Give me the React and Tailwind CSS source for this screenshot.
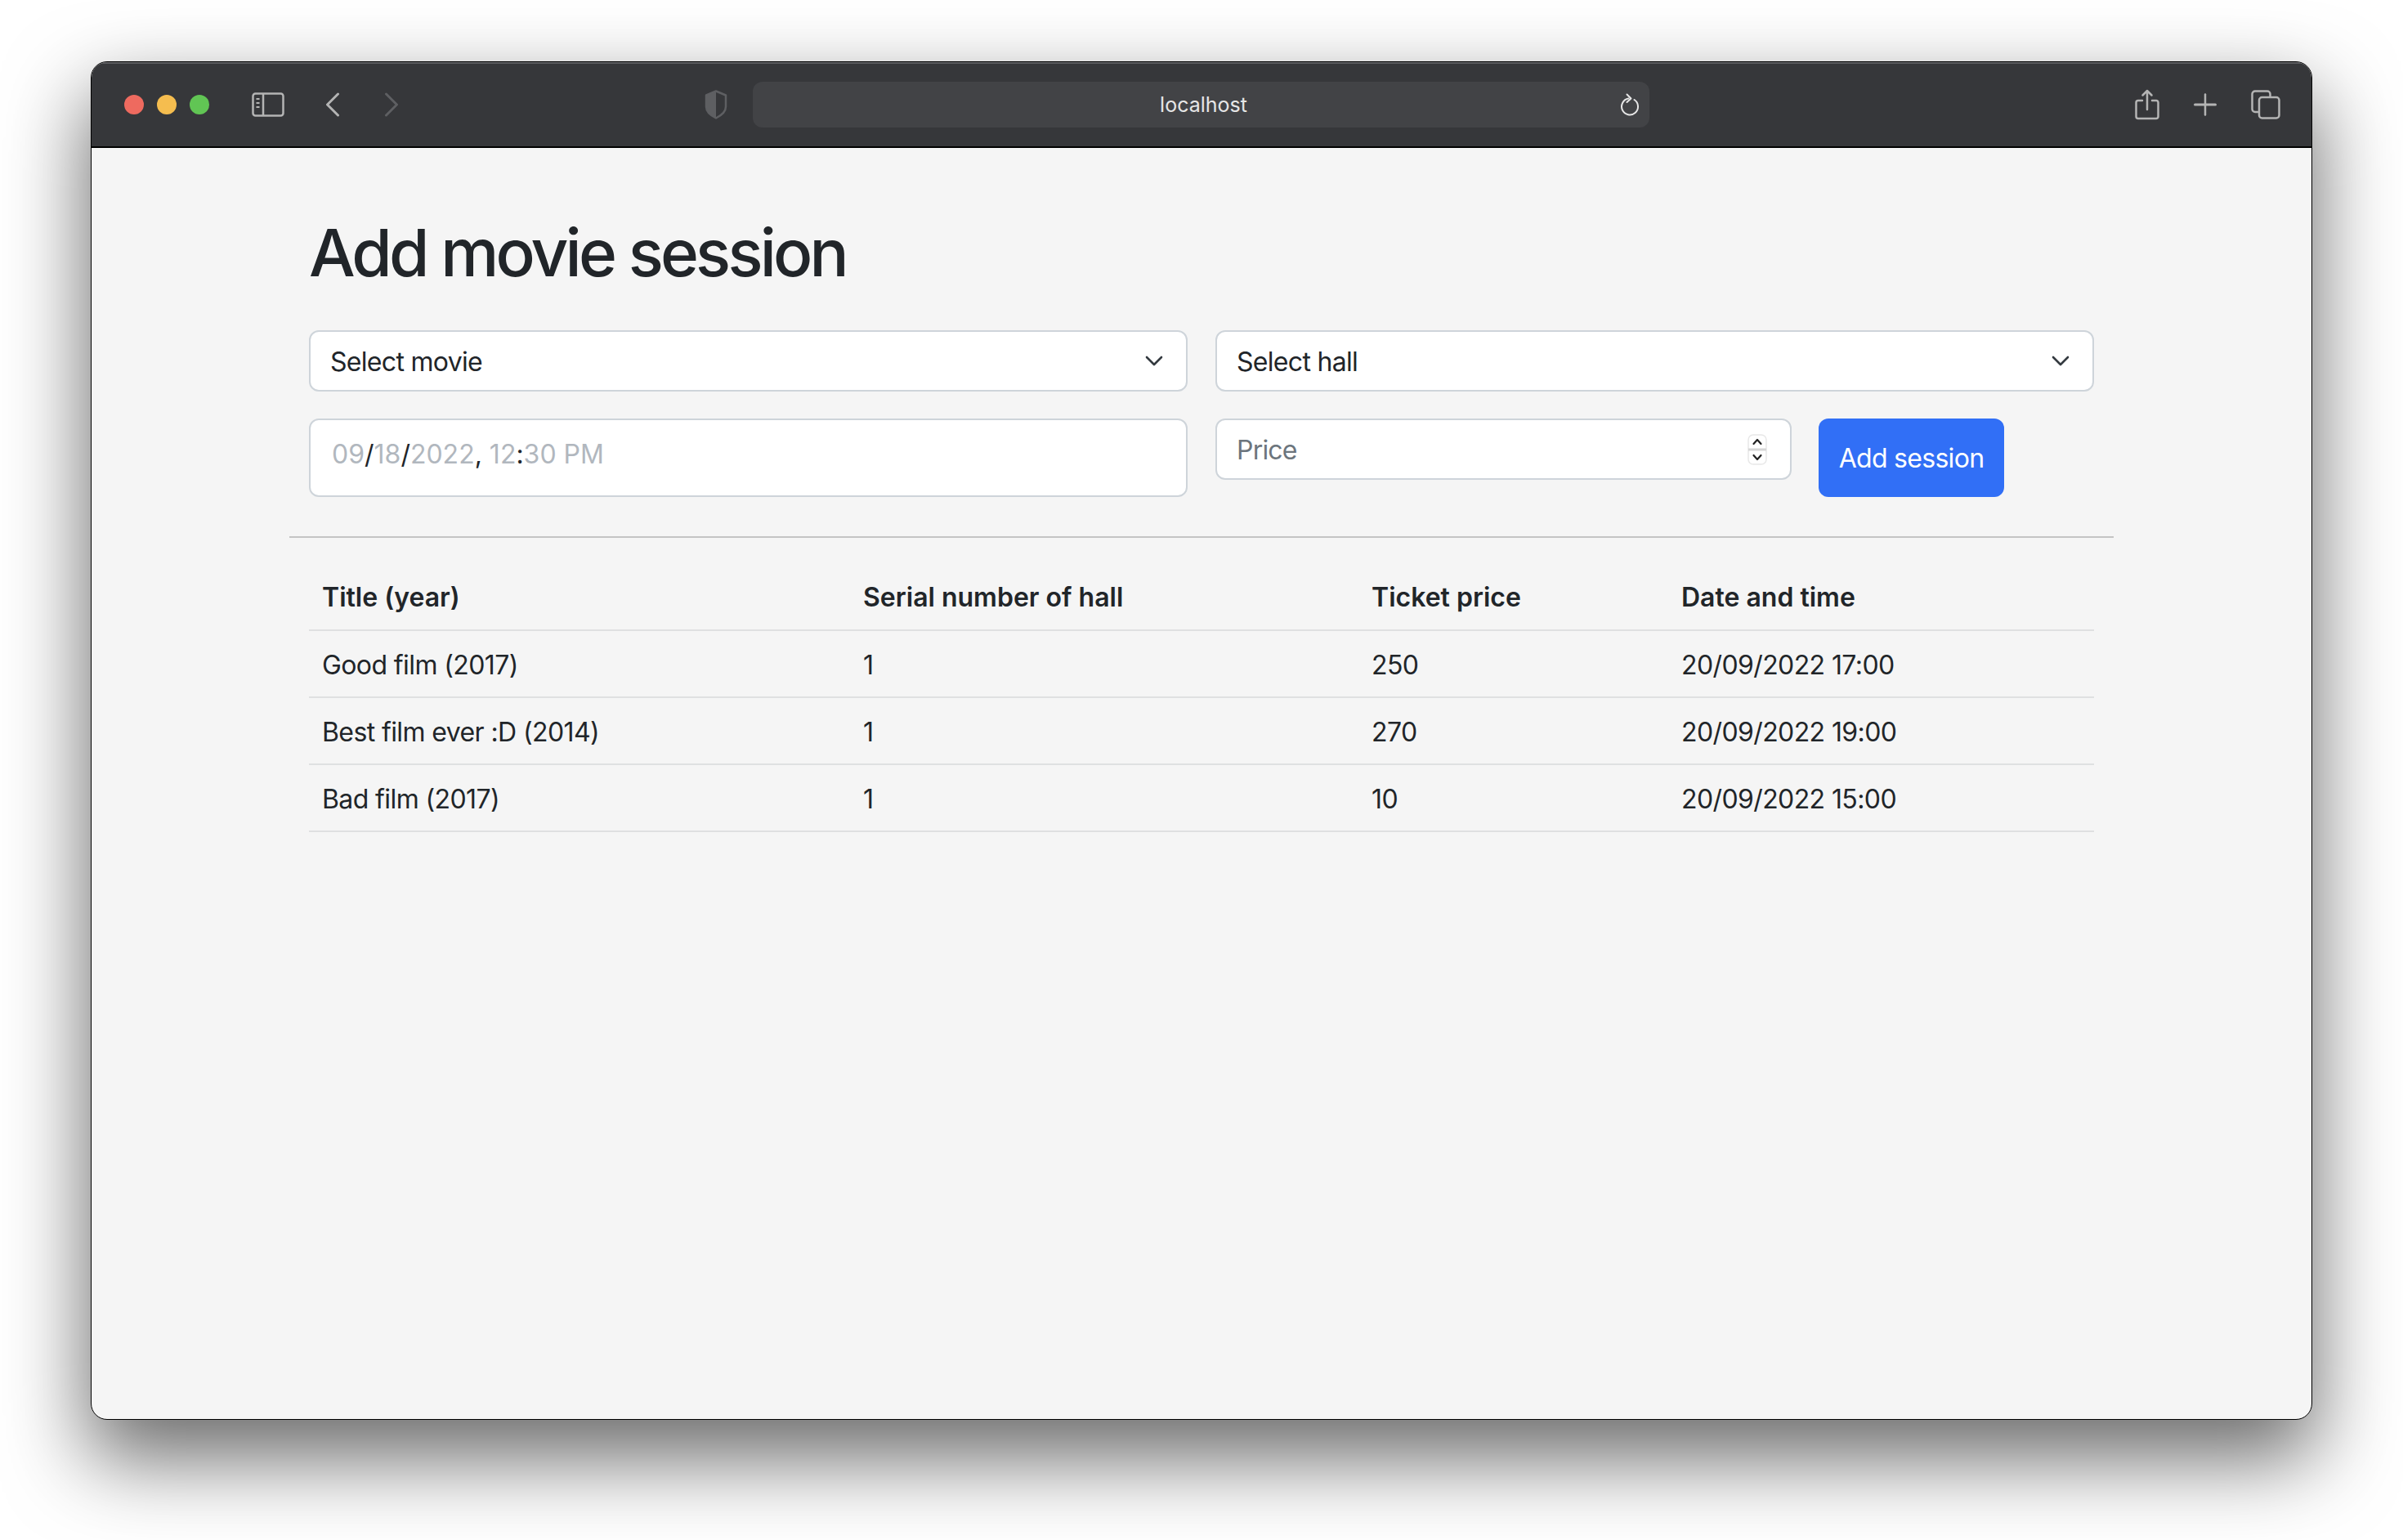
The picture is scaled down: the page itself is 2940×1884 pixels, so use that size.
import React from "react";

const rows = [
  ["Good film (2017)", "1", "250", "20/09/2022 17:00"],
  ["Best film ever :D (2014)", "1", "270", "20/09/2022 19:00"],
  ["Bad film (2017)", "1", "10", "20/09/2022 15:00"],
];

function Chevron() {
  return (
    <svg width="22" height="14" viewBox="0 0 22 14" fill="none" stroke="#343a40" strokeWidth="2.600" strokeLinecap="round" strokeLinejoin="round">
      <path d="M2 2l9 9 9-9" />
    </svg>
  );
}

function SelectBox({ label }) {
  return (
    <div className="flex h-[75px] items-center justify-between rounded-xl border-2 border-[#ced4da] bg-white pl-[24px] pr-[28px] text-[32px] tracking-[-0.7px] text-[#212529]">
      <span className="pt-[3px]">{label}</span>
      <Chevron />
    </div>
  );
}

function Toolbar() {
  return (
    <div className="flex h-[105px] shrink-0 items-center border-t-2 border-b-2 border-t-[#5c5d60] border-b-black bg-[#36373a] pb-[1px]">
      {/* traffic lights */}
      <div className="ml-[40px] flex gap-4">
        <span className="h-6 w-6 rounded-full bg-[#ee6a5f]" />
        <span className="h-6 w-6 rounded-full bg-[#f5bd4f]" />
        <span className="h-6 w-6 rounded-full bg-[#61c554]" />
      </div>

      <svg className="ml-[52px]" width="40" height="30" viewBox="0 0 40 30" fill="none" stroke="#b4b4b4" strokeWidth="2.500">
        <rect x="1.500" y="1.500" width="37" height="27" rx="3" />
        <path d="M14 1.500v27" />
        <path d="M5.500 8h4M5.500 13h4M5.500 18h4" strokeWidth="2" />
      </svg>
      <svg className="ml-[50px]" width="18" height="30" viewBox="0 0 18 30" fill="none" stroke="#b4b4b4" strokeWidth="3" strokeLinecap="round" strokeLinejoin="round">
        <path d="M15.500 2L2.500 15l13 13" />
      </svg>
      <svg className="ml-[54px]" width="18" height="30" viewBox="0 0 18 30" fill="none" stroke="#5e5f62" strokeWidth="3" strokeLinecap="round" strokeLinejoin="round">
        <path d="M2.500 2l13 13-13 13" />
      </svg>

      <svg className="ml-[374px]" width="28" height="36" viewBox="0 0 28 36" fill="none">
        <path d="M14 1.500l12 5v14c0 6-5 10.500-12 14-7-3.500-12-8-12-14v-14z" stroke="#5e5f62" strokeWidth="2.500" strokeLinejoin="round" />
        <path d="M14 1.500l-12 5v14c0 6 5 10.500 12 14z" fill="#5e5f62" />
      </svg>

      {/* url bar */}
      <div className="ml-[31px] flex h-[56px] w-[1097px] items-center rounded-xl bg-[#424346]">
        <span className="flex-1 pl-[42px] pt-[2px] text-center text-[25px] text-[#e6e6e6]">localhost</span>
        <svg className="mr-[12px]" width="24" height="28" viewBox="0 0 24 28" fill="none" stroke="#e6e6e6" strokeWidth="2" strokeLinecap="round" strokeLinejoin="round">
          <path d="M10.500 6.500a10 10 0 1 0 7 1.500" />
          <path d="M8.500 1.500l5 5-5 4.500" />
        </svg>
      </div>

      <svg className="ml-[594px]" width="30" height="38" viewBox="0 0 30 38" fill="none" stroke="#b4b4b4" strokeWidth="2.500" strokeLinecap="round" strokeLinejoin="round">
        <path d="M9 14H4a2.500 2.500 0 0 0-2.500 2.500v17A2.500 2.500 0 0 0 4 36h22a2.500 2.500 0 0 0 2.500-2.500v-17A2.500 2.500 0 0 0 26 14h-5" />
        <path d="M15 25V2M9.500 7.500L15 2l5.500 5.500" />
      </svg>
      <svg className="ml-[42px]" width="28" height="28" viewBox="0 0 28 28" fill="none" stroke="#b4b4b4" strokeLinecap="round">
        <path d="M14 1.500v25" strokeWidth="2.500" />
        <path d="M1.500 14h25" strokeWidth="3" />
      </svg>
      <svg className="ml-[42px]" width="36" height="36" viewBox="0 0 36 36" fill="none" stroke="#b4b4b4" strokeWidth="2.500" strokeLinejoin="round">
        <path d="M9.500 27H5a3.500 3.500 0 0 1-3.500-3.500V5A3.500 3.500 0 0 1 5 1.500h15A3.500 3.500 0 0 1 23.500 5v4" />
        <rect x="10" y="9" width="24.500" height="25.500" rx="3.500" />
      </svg>
    </div>
  );
}

function DateField() {
  const dim = "text-[#b1b7be]";
  return (
    <div className="flex h-[96px] items-center rounded-xl border-2 border-[#ced4da] bg-white pb-[8px] pl-[26px] text-[32px] text-[#212529]">
      <span className={dim}>09</span>/<span className={dim}>18</span>/<span className={dim}>2022</span>, <span className={`ml-[9px] ${dim}`}>12</span>:<span className={dim}>30 PM</span>
    </div>
  );
}

function PriceField() {
  return (
    <div className="flex h-[75px] w-[705px] items-center justify-between rounded-xl border-2 border-[#ced4da] bg-white pl-[24px] pr-[28px] text-[32px] tracking-[-0.8px] text-[#6c757d]">
      <span className="pt-[2px]">Price</span>
      <svg width="24" height="38" viewBox="0 0 24 38" fill="none">
        <rect x="1" y="1" width="22" height="36" rx="6" fill="#fff" stroke="#e8e8e8" strokeWidth="1.500" />
        <path d="M1 19h22" stroke="#d6d6d6" strokeWidth="3" />
        <path d="M7.500 12l4.500-5 4.500 5M7.500 26l4.500 5 4.500-5" stroke="#222" strokeWidth="2.200" strokeLinecap="round" strokeLinejoin="round" />
      </svg>
    </div>
  );
}

export default function App() {
  return (
    <div className="h-[1884px] w-[2940px] overflow-hidden bg-white pl-[111px] pt-[75px] font-['Inter',sans-serif]">
      <div className="flex h-[1662px] w-[2718px] flex-col overflow-hidden rounded-[20px] border border-black bg-[#f5f5f5] shadow-[0_44px_100px_4px_rgba(0,0,0,0.58)]">
        <Toolbar />

        <main className="flex-1 px-[266px] pt-[80px]">
          <h1 className="mb-[47px] text-[80px] font-medium leading-[96px] tracking-[-3.8px] text-[#212529]">Add movie session</h1>

          <div className="grid grid-cols-2 gap-x-[34px] gap-y-[33px]">
            <SelectBox label="Select movie" />
            <SelectBox label="Select hall" />
            <DateField />
            <div className="flex items-start gap-[33px]">
              <PriceField />
              <button className="h-[96px] w-[227px] rounded-xl bg-[#316ff6] pt-[2px] text-[32px] tracking-[-0.7px] text-white">Add session</button>
            </div>
          </div>

          <hr className="-mx-[24px] mb-[31px] mt-[48px] border-t-2 border-[#c4c4c4]" />

          <table className="w-full table-fixed border-collapse text-[32px] tracking-[-0.6px] text-[#212529]">
            <colgroup>
              <col className="w-[662px]" />
              <col className="w-[622px]" />
              <col className="w-[379px]" />
              <col />
            </colgroup>
            <thead>
              <tr className="h-[82px] border-b-2 border-[#dfe0e1]">
                <th className="px-4 pt-[3px] text-left font-semibold tracking-normal">Title (year)</th>
                <th className="px-4 pt-[3px] text-left font-semibold tracking-normal">Serial number of hall</th>
                <th className="px-4 pt-[3px] text-left font-semibold tracking-normal">Ticket price</th>
                <th className="px-4 pt-[3px] text-left font-semibold tracking-normal">Date and time</th>
              </tr>
            </thead>
            <tbody>
              {rows.map((r) => (
                <tr key={r[0]} className="h-[82px] border-b-2 border-[#dfe0e1]">
                  {r.map((c, i) => (
                    <td key={i} className="px-4 pt-[3px]">{c}</td>
                  ))}
                </tr>
              ))}
            </tbody>
          </table>
        </main>
      </div>
    </div>
  );
}
